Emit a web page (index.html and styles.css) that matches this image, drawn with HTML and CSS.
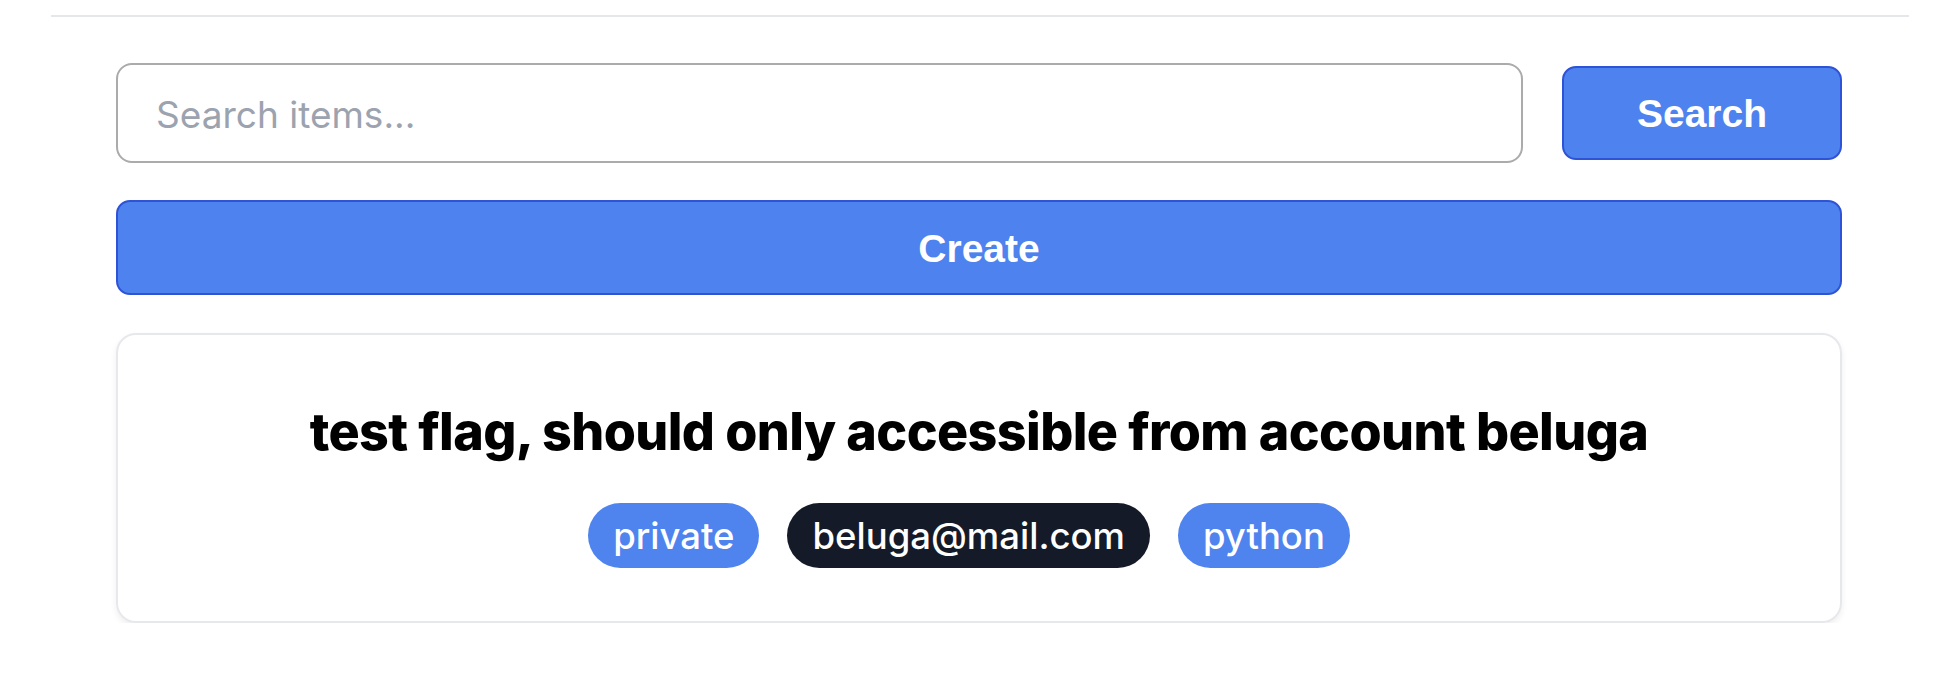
FILE: index.html
```html
<!DOCTYPE html>
<html lang="en">
<head>
<meta charset="utf-8">
<title>Items</title>
<link rel="stylesheet" href="styles.css">
</head>
<body>
<div class="page">
  <hr class="rule">
  <main class="content">
    <form class="search-row" onsubmit="return false">
      <input class="search-input" type="text" placeholder="Search items...">
      <button class="btn btn-search" type="submit">Search</button>
    </form>
    <button class="btn btn-create" type="button">Create</button>
    <section class="card">
      <h2 class="card-title">test flag, should only accessible from account beluga</h2>
      <div class="tags">
        <span class="tag tag-blue">private</span>
        <span class="tag tag-dark">beluga@mail.com</span>
        <span class="tag tag-blue">python</span>
      </div>
    </section>
  </main>
</div>
</body>
</html>
```

FILE: styles.css
```css
* { box-sizing: border-box; }

body {
  margin: 0;
  background: #ffffff;
  font-family: Inter, "Noto Sans", sans-serif;
}

.page {
  padding: 15px 41px 0 51px;
}

.rule {
  height: 2px;
  margin: 0;
  border: 0;
  background: #e6e7eb;
}

.content {
  margin: 46px 67px 0 65px;
  display: flex;
  flex-direction: column;
}

.search-row {
  display: flex;
  align-items: center;
  gap: 39px;
  margin: 0;
}

.search-input {
  flex: 1;
  height: 100px;
  border: 2px solid #ababab;
  border-radius: 16px;
  padding: 2px 38px 0;
  font-family: Inter, sans-serif;
  font-size: 37px;
  color: #111827;
  outline: none;
  background: #fff;
}

.search-input::placeholder {
  color: #9ca3af;
}

.btn {
  background: #4e82ee;
  border: 2px solid #2f53d7;
  color: #ffffff;
  font-family: "Liberation Sans", Arial, sans-serif;
  font-weight: 700;
  font-size: 39px;
  cursor: pointer;
  padding: 2px 0 0;
}

.btn-search {
  width: 280px;
  height: 94px;
  border-radius: 14px;
}

.btn-create {
  margin-top: 37px;
  width: 100%;
  height: 95px;
  border-radius: 14px;
}

.card {
  margin-top: 38px;
  height: 290px;
  border: 2px solid #e7e8ec;
  border-radius: 20px;
  box-shadow: 0 3px 6px rgba(0, 0, 0, 0.07);
  padding: 68px 40px 0;
  display: flex;
  flex-direction: column;
  align-items: center;
}

.card-title {
  margin: 0;
  font-family: Inter, sans-serif;
  font-weight: 800;
  font-size: 52px;
  line-height: 58px;
  letter-spacing: -0.6px;
  color: #000000;
  text-align: center;
}

.tags {
  margin-top: 42px;
  padding-right: 20px;
  display: flex;
  gap: 28px;
}

.tag {
  display: inline-flex;
  align-items: center;
  height: 65px;
  padding: 0 25px;
  border-radius: 9999px;
  font-family: Inter, sans-serif;
  font-weight: 500;
  font-size: 36.5px;
  color: #ffffff;
}

.tag-blue { background: #4f83ee; }
.tag-dark { background: #151a28; }
```
